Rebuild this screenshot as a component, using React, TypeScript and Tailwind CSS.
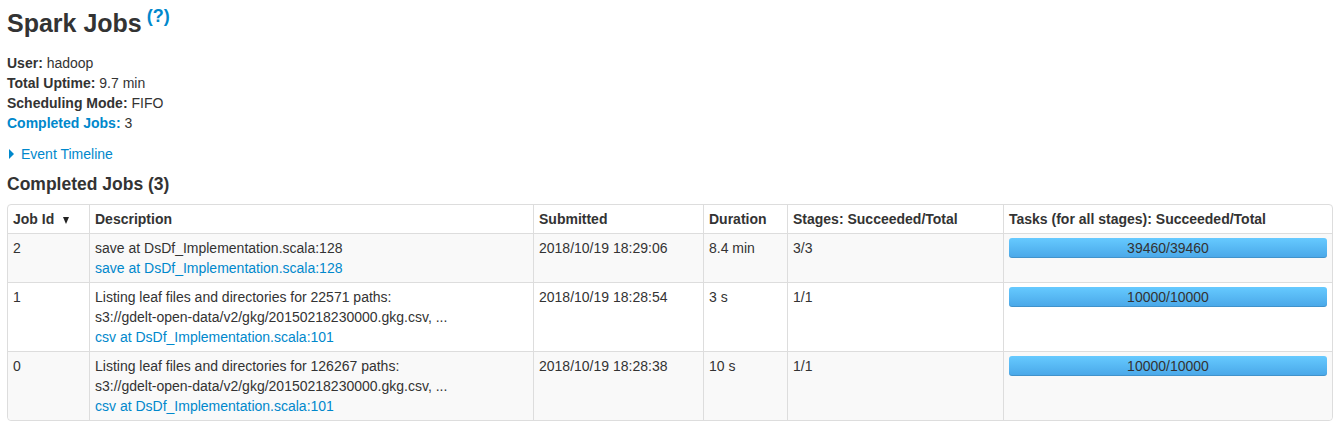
import React from "react";

type Job = {
  id: number;
  desc: string[];
  link: string;
  submitted: string;
  duration: string;
  stages: string;
  tasks: string;
};

const jobs: Job[] = [
  {
    id: 2,
    desc: ["save at DsDf_Implementation.scala:128"],
    link: "save at DsDf_Implementation.scala:128",
    submitted: "2018/10/19 18:29:06",
    duration: "8.4 min",
    stages: "3/3",
    tasks: "39460/39460",
  },
  {
    id: 1,
    desc: [
      "Listing leaf files and directories for 22571 paths:",
      "s3://gdelt-open-data/v2/gkg/20150218230000.gkg.csv, ...",
    ],
    link: "csv at DsDf_Implementation.scala:101",
    submitted: "2018/10/19 18:28:54",
    duration: "3 s",
    stages: "1/1",
    tasks: "10000/10000",
  },
  {
    id: 0,
    desc: [
      "Listing leaf files and directories for 126267 paths:",
      "s3://gdelt-open-data/v2/gkg/20150218230000.gkg.csv, ...",
    ],
    link: "csv at DsDf_Implementation.scala:101",
    submitted: "2018/10/19 18:28:38",
    duration: "10 s",
    stages: "1/1",
    tasks: "10000/10000",
  },
];

const th = "border-l border-[#dddddd] px-[5px] py-[4px] text-left align-top font-bold";
const td = "border-l border-t border-[#dddddd] px-[5px] py-[4px] text-left align-top";

export default function App() {
  return (
    <div
      className="min-h-screen bg-white px-[7px] text-[14px] leading-[20px] text-[#333333]"
      style={{ fontFamily: '"Liberation Sans", Arial, sans-serif' }}
    >
      <h3 className="pt-[8px] text-[25px] font-bold leading-[30px]">
        Spark Jobs
        <sup className="relative -top-[10px] ml-[5px] text-[18px] font-bold text-[#0088cc]">(?)</sup>
      </h3>

      <ul className="mt-[15px]">
        <li>
          <strong>User:</strong> hadoop
        </li>
        <li>
          <strong>Total Uptime:</strong> 9.7 min
        </li>
        <li>
          <strong>Scheduling Mode:</strong> FIFO
        </li>
        <li>
          <a className="font-bold text-[#0088cc]">Completed Jobs:</a> 3
        </li>
      </ul>

      <div className="mt-[11px] flex items-center text-[#0088cc]">
        <span className="ml-[2px] mr-[7px] inline-block h-0 w-0 border-y-[5px] border-l-[5px] border-y-transparent border-l-[#0088cc]" />
        <a>Event Timeline</a>
      </div>

      <h4 className="mt-[10px] text-[17.5px] font-bold leading-[20px]">Completed Jobs (3)</h4>

      <table className="mt-[10px] w-[1326px] table-fixed border-separate border-spacing-0 rounded-[4px] border border-[#dddddd]">
        <thead>
          <tr>
            <th className={th + " w-[81px] border-l-0"}>
              Job Id
              <span className="ml-[9px] inline-block h-0 w-0 border-x-[3.5px] border-t-[7px] border-x-transparent border-t-[#222222] align-middle" />
            </th>
            <th className={th + " w-[444px]"}>Description</th>
            <th className={th + " w-[170px]"}>Submitted</th>
            <th className={th + " w-[84px]"}>Duration</th>
            <th className={th + " w-[216px]"}>Stages: Succeeded/Total</th>
            <th className={th + " w-[329px]"}>Tasks (for all stages): Succeeded/Total</th>
          </tr>
        </thead>
        <tbody>
          {jobs.map((job, i) => (
            <tr key={job.id} className={i % 2 === 0 ? "bg-[#f9f9f9]" : "bg-white"}>
              <td className={td + " border-l-0" + (i === jobs.length - 1 ? " rounded-bl-[4px]" : "")}>
                {job.id}
              </td>
              <td className={td}>
                {job.desc.map((line, j) => (
                  <div key={j}>{line}</div>
                ))}
                <a className="block text-[#0088cc]">{job.link}</a>
              </td>
              <td className={td}>{job.submitted}</td>
              <td className={td}>{job.duration}</td>
              <td className={td}>{job.stages}</td>
              <td className={td + (i === jobs.length - 1 ? " rounded-br-[4px]" : "")}>
                <div className="h-[20px] rounded-[3px] bg-gradient-to-b from-[#66caff] to-[#49a7e8] text-center leading-[20px] text-[#333333] shadow-[inset_0_-1px_0_rgba(0,0,0,0.12)]">
                  {job.tasks}
                </div>
              </td>
            </tr>
          ))}
        </tbody>
      </table>
    </div>
  );
}
